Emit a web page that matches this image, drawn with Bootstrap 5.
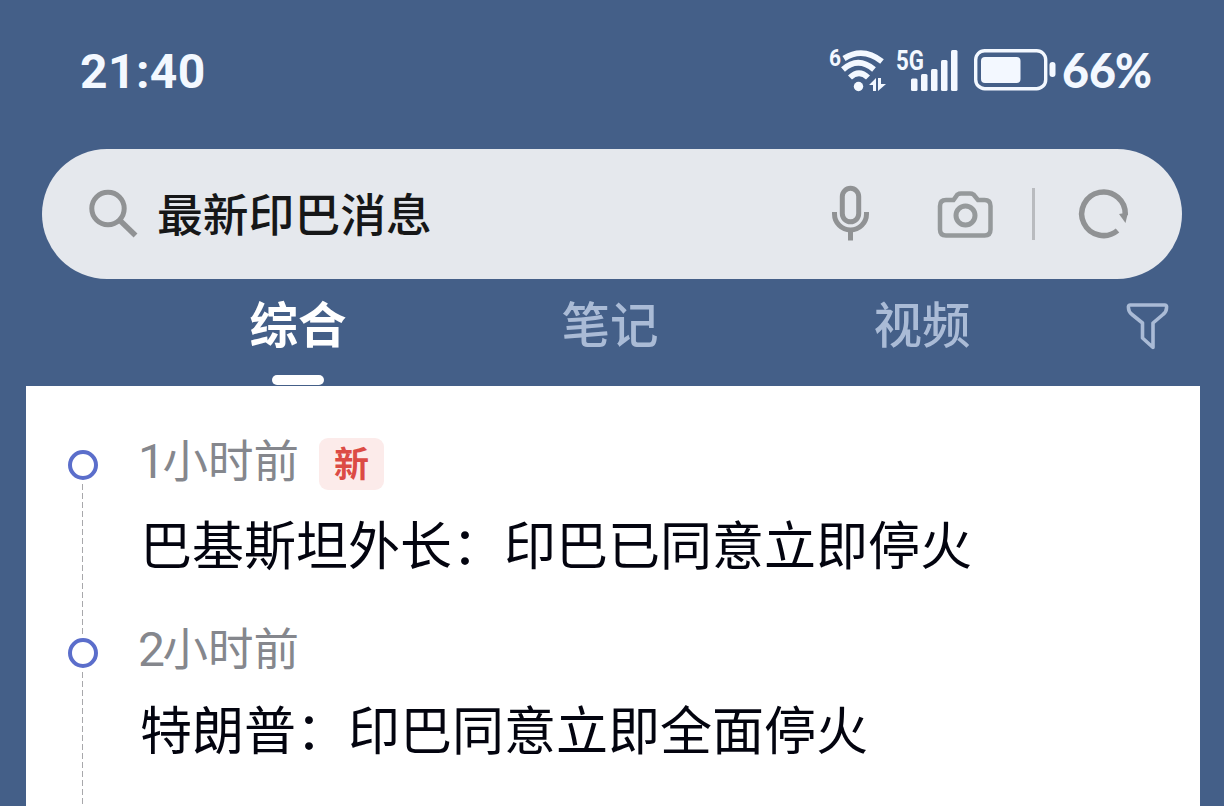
<!DOCTYPE html>
<html lang="zh-CN">
<head>
  <meta charset="UTF-8" />
  <meta name="viewport" content="width=device-width, initial-scale=1.0" />
  <title>最新印巴消息</title>
  <link href="https://cdn.jsdelivr.net/npm/bootstrap@5.3.3/dist/css/bootstrap.min.css" rel="stylesheet" />
  <style>
    body {
      background: #445f88;
      font-family: "Noto Sans CJK SC", sans-serif;
      height: 806px;
    }
    svg { display: block; flex: none; overflow: visible; }
    .status-bar { height: 142px; padding: 0 74px 0 80px; margin-bottom: 7px; color: #f3f8ff; }
    .clock, .percent { font-family: Lato, sans-serif; font-weight: 900; font-size: 48px; line-height: 60px; }
    .clock { font-family: Roboto, sans-serif; font-weight: 700; letter-spacing: .4px; padding-top: 2px; }
    .search-bar { height: 130px; margin: 0 42px; padding: 0 50px 0 45px; background: #e5e8ed; color: #909294; }
    .search-text { font-size: 45.8px; font-weight: 500; line-height: 60px; color: #161718; margin: -4px 0 0 18px; }
    .divider { width: 3px; height: 52px; background: #b9bbbf; }
    .tab-bar { height: 107px; padding-left: 142px; color: #aabbd6; }
    .tab-item { width: 312px; font-size: 48.5px; font-weight: 500; line-height: 60px; padding-top: 13px; }
    .tab-item.active { color: #fff; font-weight: 700; }
    .tab-line { width: 52px; height: 10px; border-radius: 5px; background: #fff; margin-top: 23px; }
    .filter-icon { margin: 21px 0 0 44px; color: #aabbd6; }
    .news-panel { margin: 0 24px 0 26px; height: 420px; padding: 46px 0 0 42px; background: #fff; }
    .news-item { height: 188px; }
    .rail { width: 30px; padding-top: 18px; margin-right: 42px; }
    .dot { width: 30px; height: 30px; border: 4px solid #5b6ecb; border-radius: 50%; flex: none; }
    .dash { width: 1px; background: repeating-linear-gradient(#a8a8ab 0 6px, transparent 6px 9px); margin: 4px 1px -16px 0; }
    .news-time { font-size: 45.5px; line-height: 60px; color: #85878d; margin: -4px 0 0 -2px; }
    .news-time .num { font-family: Roboto, sans-serif; font-weight: 400; font-size: 48px; letter-spacing: -2.5px; }
    .news-title { font-size: 52px; line-height: 70px; color: #03040f; margin-top: 16px; }
    .news-item + .news-item .news-title { margin-top: 13px; }
    .new-tag { width: 65px; height: 52px; margin: 2px 0 -2px 20px; border-radius: 9px; background: #fcebea; color: #dc4b45; font-size: 35px; font-weight: 700; line-height: 48px; }
  </style>
</head>
<body class="overflow-hidden">
  <!-- Status bar -->
  <div class="status-bar d-flex justify-content-between align-items-center">
    <div class="clock">21:40</div>
    <div class="d-flex align-items-center">
      <svg width="242" height="60" viewBox="816 41 242 60" fill="currentColor">
        <text x="829" y="65.500" font-family="Roboto" font-weight="700" font-size="24" textLength="12" lengthAdjust="spacingAndGlyphs">6</text>
        <g fill="none" stroke="currentColor" stroke-width="5.800">
          <path d="M844 58.500Q863 46.500 882 61.500" />
          <path d="M843 69.500Q858 56 874 69.500" />
          <path d="M850 77.500Q859 69 868 77.500" />
        </g>
        <circle cx="858.500" cy="86.500" r="4.700" />
        <path d="M869 85L876 78V91H873V85ZM878 78H881V84H886L878 91Z" />
        <text x="896" y="70" font-family="Roboto" font-weight="700" font-size="27" textLength="28" lengthAdjust="spacingAndGlyphs">5G</text>
        <rect x="911" y="78.500" width="6.500" height="12.500" rx="1.500" />
        <rect x="921" y="74" width="6.500" height="17" rx="1.500" />
        <rect x="931" y="69" width="6.500" height="22" rx="1.500" />
        <rect x="941" y="60" width="6.500" height="31" rx="1.500" />
        <rect x="951" y="50" width="6.500" height="41" rx="1.500" />
        <rect x="975.700" y="50.700" width="70" height="38" rx="9" fill="none" stroke="currentColor" stroke-width="3.400" />
        <rect x="981" y="57" width="39.500" height="26" rx="4" />
        <rect x="1049.500" y="62" width="6" height="15" rx="3" />
      </svg>
      <svg width="92" height="50" viewBox="1058 46 92 50" fill="currentColor" class="percent">
        <text x="1062" y="88" textLength="54" lengthAdjust="spacingAndGlyphs">66</text>
        <text x="1115" y="88" textLength="37" lengthAdjust="spacingAndGlyphs">%</text>
      </svg>
    </div>
  </div>

  <!-- Search bar -->
  <div class="search-bar rounded-pill d-flex align-items-center">
    <svg width="52" height="52" viewBox="87 188 52 52" fill="none" stroke="currentColor" stroke-width="5">
      <circle cx="108" cy="208.500" r="16.200" />
      <path d="M119.500 220L135.500 235.500" stroke-width="5.500" />
    </svg>
    <div class="search-text">最新印巴消息</div>
    <div class="d-flex align-items-center ms-auto">
      <svg width="202" height="60" viewBox="830 184 202 60" fill="none" stroke="currentColor" stroke-width="5">
        <rect x="842.300" y="188.300" width="16.400" height="33.500" rx="8.200" />
        <path d="M834.500 212V214A16 16 0 0 0 866.500 214V212M850.500 230V240.500" />
        <path d="M946 200H953.500L957.500 194.500Q959 193.500 961 193.500H970Q972 193.500 973.500 194.500L978 200H984.500Q990.500 200 990.500 206V229.500Q990.500 235.500 984.500 235.500H946Q940 235.500 940 229.500V206Q940 200 946 200Z" stroke="#95999b" stroke-width="4.500" />
        <circle cx="965.500" cy="215.500" r="9.500" stroke="#95999b" />
      </svg>
      <div class="divider"></div>
      <svg width="97" height="60" viewBox="1035 184 97 60" fill="none" stroke="currentColor" stroke-width="5.500">
        <path d="M1117.500 230.500A21.800 21.800 0 1 1 1125.300 215" />
        <path d="M1119 214L1128 212.500L1125.500 223Z" fill="currentColor" stroke="none" />
      </svg>
    </div>
  </div>

  <!-- Tabs -->
  <div class="tab-bar d-flex">
    <div class="tab-item active d-flex flex-column align-items-center">
      <span>综合</span>
      <div class="tab-line"></div>
    </div>
    <div class="tab-item text-center">笔记</div>
    <div class="tab-item text-center">视频</div>
    <svg class="filter-icon" width="50" height="54" viewBox="1122 300 50 54" fill="none" stroke="currentColor" stroke-width="3.600" stroke-linejoin="round">
      <path d="M1130 305H1165Q1167 305 1166.500 308Q1166.500 312 1163 314.500L1153 323V347.500L1142.500 338V323L1132 314.500Q1128.500 312 1128.500 308Q1128 305 1130 305Z" />
    </svg>
  </div>

  <!-- Timeline -->
  <div class="news-panel overflow-hidden">
    <div class="news-item d-flex">
      <div class="rail d-flex flex-column align-items-center">
        <div class="dot"></div>
        <div class="dash flex-grow-1"></div>
      </div>
      <div>
        <div class="d-flex align-items-center">
          <div class="news-time"><span class="num">1</span>小时前</div>
          <span class="new-tag text-center">新</span>
        </div>
        <div class="news-title">巴基斯坦外长：印巴已同意立即停火</div>
      </div>
    </div>
    <div class="news-item d-flex">
      <div class="rail d-flex flex-column align-items-center">
        <div class="dot"></div>
        <div class="dash flex-grow-1"></div>
      </div>
      <div>
        <div class="news-time"><span class="num">2</span>小时前</div>
        <div class="news-title">特朗普：印巴同意立即全面停火</div>
      </div>
    </div>
  </div>
  <script src="https://cdn.jsdelivr.net/npm/bootstrap@5.3.3/dist/js/bootstrap.bundle.min.js"></script>
</body>
</html>
